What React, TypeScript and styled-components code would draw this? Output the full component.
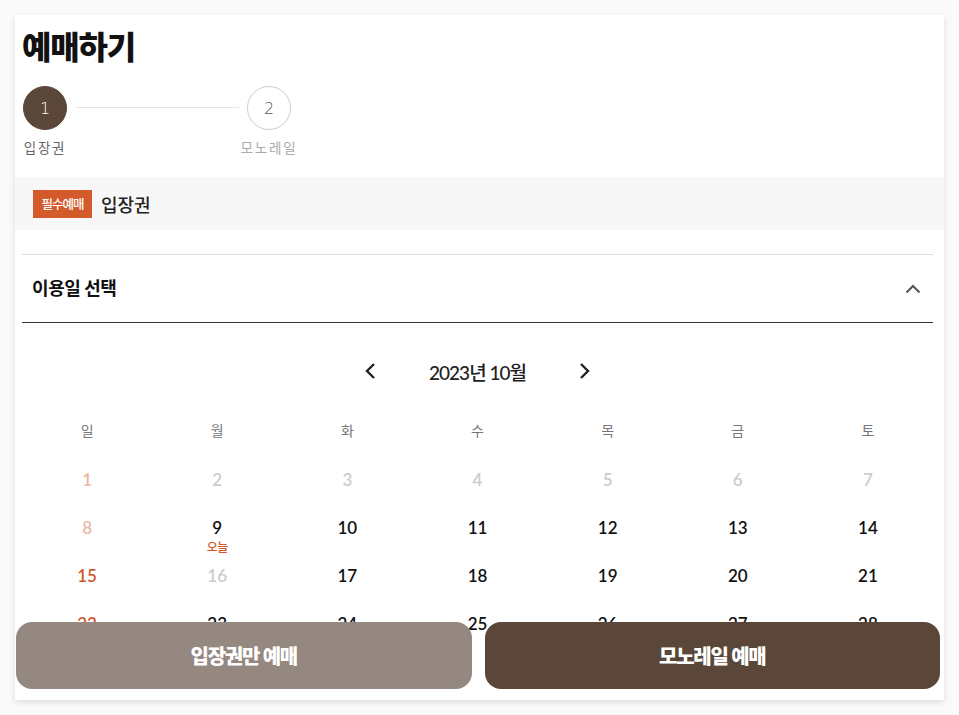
import React from 'react';
import styled, { createGlobalStyle } from 'styled-components';

const GlobalStyle = createGlobalStyle`
  body {
    margin: 0;
    background: #fafafa;
    font-family: Lato, "Noto Sans CJK KR", sans-serif;
    color: #111;
  }
`;

const Card = styled.div`
  position: relative;
  margin: 15px;
  width: 929px;
  height: 685px;
  background: #fff;
  box-shadow: 0 2px 6px rgba(0, 0, 0, 0.12);
  overflow: hidden;
`;

const Title = styled.h1`
  margin: 0;
  padding: 12px 0 0 7px;
  font-family: "Noto Sans CJK KR", sans-serif;
  font-size: 32px;
  line-height: 37px;
  font-weight: 900;
  letter-spacing: -1.2px;
  color: #111;
`;

const Stepper = styled.div`
  display: flex;
  align-items: flex-start;
  padding: 22px 0 0 8px;
`;

const Step = styled.div`
  display: flex;
  flex-direction: column;
  align-items: center;
  width: 44px;
`;

const Circle = styled.div<{ $active?: boolean }>`
  width: 44px;
  height: 44px;
  box-sizing: border-box;
  border-radius: 50%;
  display: flex;
  align-items: center;
  justify-content: center;
  font-size: 16px;
  font-family: "DejaVu Sans", sans-serif;
  font-weight: 300;
  background: ${p => (p.$active ? '#5a4739' : '#fff')};
  color: ${p => (p.$active ? '#fff' : '#555')};
  border: 1px solid ${p => (p.$active ? '#5a4739' : '#ccc')};
`;

const StepLabel = styled.div<{ $active?: boolean }>`
  margin-top: 8px;
  font-family: "Noto Sans CJK KR", sans-serif;
  font-size: 13.5px;
  line-height: 18px;
  letter-spacing: 1.8px;
  white-space: nowrap;
  color: ${p => (p.$active ? '#666' : '#aaa')};
`;

const StepLine = styled.div`
  width: 163px;
  height: 1px;
  margin: 21px 8px 0 9px;
  background: #e5e5e5;
`;

const Band = styled.div`
  display: flex;
  align-items: center;
  gap: 9px;
  height: 53px;
  margin-top: 21px;
  padding-left: 18px;
  background: #f7f7f7;
`;

const Badge = styled.span`
  display: inline-flex;
  align-items: center;
  justify-content: center;
  width: 59px;
  height: 28px;
  background: #d35a2b;
  color: #fff;
  font-family: "Noto Sans CJK KR", sans-serif;
  font-size: 12.5px;
  font-weight: 500;
  letter-spacing: -1px;
`;

const BandTitle = styled.span`
  font-family: "Noto Sans CJK KR", sans-serif;
  font-size: 18px;
  font-weight: 500;
  color: #222;
`;

const Section = styled.div`
  margin: 24px 11px 0 7px;
`;

const SectionHeader = styled.div`
  display: flex;
  align-items: center;
  justify-content: space-between;
  height: 63px;
  padding: 0 12px 4px 10px;
  border-top: 1px solid #ddd;
  border-bottom: 1px solid #333;
  font-family: "Noto Sans CJK KR", sans-serif;
  font-size: 18px;
  font-weight: 700;
  letter-spacing: -0.4px;
  color: #111;

  svg {
    margin-top: 4px;
  }
`;

const Nav = styled.div`
  display: flex;
  align-items: center;
  justify-content: center;
  height: 32px;
  margin-top: 32px;
`;

const NavButton = styled.button`
  display: flex;
  align-items: center;
  justify-content: center;
  width: 30px;
  height: 30px;
  padding: 0;
  border: none;
  background: none;
`;

const Month = styled.div`
  width: 184px;
  text-align: center;
  font-size: 19px;
  font-weight: 500;
  letter-spacing: -1px;
  color: #222;
`;

const Grid = styled.div`
  display: grid;
  grid-template-columns: repeat(7, 1fr);
  margin-top: 21px;
`;

const WeekDay = styled.div`
  height: 44px;
  display: flex;
  align-items: center;
  justify-content: center;
  font-family: "Noto Sans CJK KR", sans-serif;
  font-size: 14px;
  color: #777;
`;

const DayCell = styled.div`
  height: 48px;
  display: flex;
  flex-direction: column;
  align-items: center;
  padding-top: 18px;
  box-sizing: border-box;
`;

const DayNum = styled.div<{ $tone: string }>`
  font-size: 17px;
  line-height: 20px;
  font-weight: 600;
  color: ${p => p.$tone};
`;

const Today = styled.div`
  margin-top: 2px;
  font-family: "Noto Sans CJK KR", sans-serif;
  font-size: 12px;
  line-height: 14px;
  font-weight: 500;
  letter-spacing: -0.5px;
  color: #d4572a;
`;

const Actions = styled.div`
  position: absolute;
  left: 1px;
  right: 4px;
  bottom: 11px;
  display: flex;
  gap: 13px;
`;

const ActionButton = styled.button<{ $primary?: boolean }>`
  flex: 1;
  height: 67px;
  border: none;
  border-radius: 16px;
  background: ${p => (p.$primary ? '#5a4739' : '#958880')};
  color: #fff;
  font-family: "Noto Sans CJK KR", sans-serif;
  font-size: 20px;
  font-weight: 900;
  letter-spacing: -1.2px;
`;

const Chevron = ({ dir }: { dir: 'left' | 'right' | 'up' }) => {
  if (dir === 'up') {
    return (
      <svg width="16" height="10" viewBox="0 0 16 10">
        <polyline points="1.5,8.5 8,2 14.5,8.5" fill="none" stroke="#555" strokeWidth="2" />
      </svg>
    );
  }
  const pts = dir === 'left' ? '10,2 3,9 10,16' : '3,2 10,9 3,16';
  return (
    <svg width="14" height="18" viewBox="0 0 14 18">
      <polyline points={pts} fill="none" stroke="#222" strokeWidth="2.4" />
    </svg>
  );
};

const weekDays = ['일', '월', '화', '수', '목', '금', '토'];

const toneFor = (d: number, col: number) => {
  if (d < 9 || d === 16) return col === 0 ? '#ebb9a3' : '#cccccc';
  if (col === 0) return '#d4572a';
  return '#111';
};

const App = () => {
  const days = Array.from({ length: 31 }, (_, i) => i + 1);

  return (
    <>
      <GlobalStyle />
      <Card>
        <Title>예매하기</Title>
        <Stepper>
          <Step>
            <Circle $active>1</Circle>
            <StepLabel $active>입장권</StepLabel>
          </Step>
          <StepLine />
          <Step>
            <Circle>2</Circle>
            <StepLabel>모노레일</StepLabel>
          </Step>
        </Stepper>
        <Band>
          <Badge>필수예매</Badge>
          <BandTitle>입장권</BandTitle>
        </Band>
        <Section>
          <SectionHeader>
            <span>이용일 선택</span>
            <Chevron dir="up" />
          </SectionHeader>
          <Nav>
            <NavButton><Chevron dir="left" /></NavButton>
            <Month>2023년 10월</Month>
            <NavButton><Chevron dir="right" /></NavButton>
          </Nav>
          <Grid>
            {weekDays.map(w => (
              <WeekDay key={w}>{w}</WeekDay>
            ))}
            {days.map((d, i) => (
              <DayCell key={d}>
                <DayNum $tone={toneFor(d, i % 7)}>{d}</DayNum>
                {d === 9 && <Today>오늘</Today>}
              </DayCell>
            ))}
          </Grid>
        </Section>
        <Actions>
          <ActionButton>입장권만 예매</ActionButton>
          <ActionButton $primary>모노레일 예매</ActionButton>
        </Actions>
      </Card>
    </>
  );
};

export default App;
